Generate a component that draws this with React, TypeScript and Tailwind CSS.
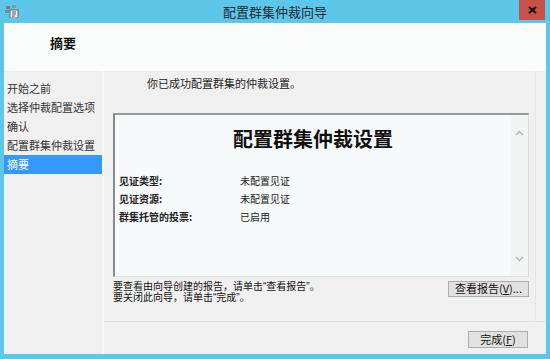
import React from 'react'

const FONT = { fontFamily: '"Microsoft YaHei", "Noto Sans CJK SC", "Noto Sans", sans-serif' }
const TIGHT = { fontFamily: '"Liberation Sans", "Noto Sans CJK SC", sans-serif' }

const NAV = ['开始之前', '选择仲裁配置选项', '确认', '配置群集仲裁设置', '摘要']

const ROWS: [string, string][] = [
  ['见证类型:', '未配置见证'],
  ['见证资源:', '未配置见证'],
  ['群集托管的投票:', '已启用'],
]

function AppIcon() {
  return (
    <svg width="14" height="13" viewBox="0 0 14 13">
      <rect x="1" y="1" width="4" height="3" fill="#6d7b86" />
      <rect x="7" y="0" width="4" height="3" fill="#8b96a0" />
      <rect x="0" y="5" width="4" height="3" fill="#7a8792" />
      <rect x="5" y="5" width="8" height="8" fill="#f5f5f5" stroke="#5a6670" strokeWidth="1" />
      <path d="M7 7h4M7 9h4M7 11h3" stroke="#4a5560" strokeWidth="1" />
    </svg>
  )
}

function WinButton({ children, className }: { children: React.ReactNode; className: string }) {
  return (
    <div
      className={`flex items-center justify-center border border-[#adadad] bg-[#e1e1e1] text-[11px] text-[#111] ${className}`}
    >
      {children}
    </div>
  )
}

export default function App() {
  return (
    <div className="flex h-[359px] w-[550px] flex-col bg-[#5ec6e8]" style={FONT}>
      {/* Title bar */}
      <div className="relative flex h-[23px] shrink-0 items-center justify-center">
        <div className="absolute left-[5px] top-[5px]">
          <AppIcon />
        </div>
        <span className="text-[13px] text-[#1e2a33]">配置群集仲裁向导</span>
        <div className="absolute right-[5px] top-0 flex h-[20px] w-[26px] items-center justify-center bg-[#c7504b]">
          <svg width="9" height="8" viewBox="0 0 9 8">
            <path d="M1 1l7 6M8 1L1 7" stroke="#1a0a0a" strokeWidth="2" />
          </svg>
        </div>
      </div>

      <div className="mx-[4px] mb-[5px] flex flex-1 flex-col bg-[#f0f0f0]">
        {/* Header */}
        <div className="flex h-[48px] shrink-0 items-center bg-[#fafbfb] pl-[46px]">
          <span className="-mt-[9px] text-[13px] font-bold text-[#111]">摘要</span>
        </div>

        <div className="flex flex-1">
          {/* Nav */}
          <div className="flex w-[98px] shrink-0 flex-col pt-[8px]">
            {NAV.map((n, i) => (
              <div
                key={n}
                className={`flex h-[19px] items-center pl-[3px] text-[11px] ${
                  i === NAV.length - 1 ? 'bg-[#3399ff] text-white' : 'text-[#333]'
                }`}
              >
                {n}
              </div>
            ))}
          </div>
          <div className="w-[2px] shrink-0 bg-[#f7f7f7]" />

          {/* Content */}
          <div className="flex flex-1 flex-col">
            <div className="mr-[10px] flex flex-1 flex-col border-r border-[#e4e4e4] pl-[9px] pr-[6px]">
              <div className="pl-[34px] pt-[4px] text-[11px] text-[#222]">你已成功配置群集的仲裁设置。</div>

              <div className="mt-[21px] flex h-[164px] border-l-2 border-t-2 border-l-[#8a8a8a] border-t-[#9a9a9a] border-r border-b border-r-[#dcdcdc] border-b-[#dcdcdc] bg-[#f7fafa]">
                <div className="flex flex-1 flex-col">
                  <div className="pt-[9px] text-center text-[20px] font-bold leading-[30px] text-[#111]">
                    配置群集仲裁设置
                  </div>
                  <div className="mt-[20px] flex flex-col gap-[4px] pl-[4px]">
                    {ROWS.map(([k, v]) => (
                      <div key={k} className="flex h-[14px] items-center text-[10px]">
                        <span className="w-[121px] font-bold text-[#222]">{k}</span>
                        <span className="text-[#222]">{v}</span>
                      </div>
                    ))}
                  </div>
                </div>
                <div className="flex w-[17px] flex-col items-center justify-between bg-[#f3f5f5] pb-[14px] pt-[15px]">
                  <svg width="9" height="6" viewBox="0 0 9 6">
                    <path d="M1 5l3.5-3.5L8 5" fill="none" stroke="#b5b5b5" strokeWidth="1.5" />
                  </svg>
                  <svg width="9" height="6" viewBox="0 0 9 6">
                    <path d="M1 1l3.5 3.5L8 1" fill="none" stroke="#b5b5b5" strokeWidth="1.5" />
                  </svg>
                </div>
              </div>

              <div className="mt-[4px] flex items-start">
                <div className="flex-1 text-[10px] leading-[11.5px] text-[#111]" style={TIGHT}>
                  <div>要查看由向导创建的报告，请单击“查看报告”。</div>
                  <div>要关闭此向导，请单击“完成”。</div>
                </div>
                <WinButton className="h-[16px] w-[81px]">查看报告(<u>V</u>)...</WinButton>
              </div>
              <div className="flex-1" />
            </div>
            <div className="h-[1px] bg-[#e2e2e2]" />
            <div className="flex h-[32px] items-start justify-end pr-[18px] pt-[9px]">
              <WinButton className="h-[17px] w-[60px]">完成(<u>F</u>)</WinButton>
            </div>
          </div>
        </div>
      </div>
    </div>
  )
}
